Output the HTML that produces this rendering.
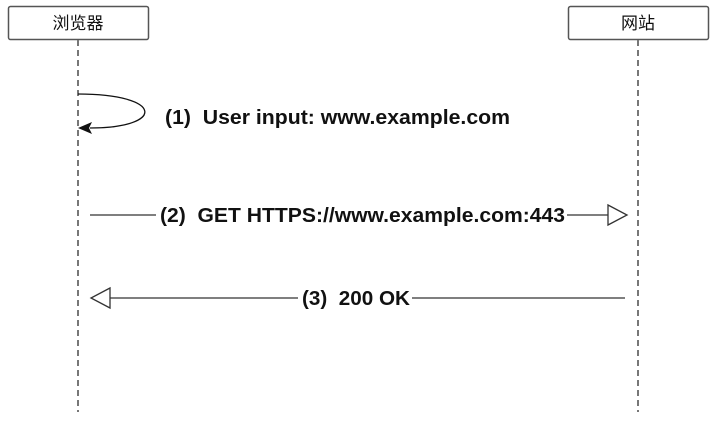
<!DOCTYPE html>
<html><head><meta charset="utf-8"><style>
body{margin:0;width:719px;height:420px;background:#fff;overflow:hidden}
svg text{font-family:"Liberation Sans",Arial,sans-serif;font-weight:bold;font-size:20.5px;fill:#111}
.cj{font-family:"Liberation Sans","Noto Sans CJK SC",sans-serif;font-weight:normal;font-size:17px}
</style></head><body>
<svg width="719" height="420" xmlns="http://www.w3.org/2000/svg">
<rect x="8.5" y="6.5" width="140" height="33" rx="2" fill="#fff" stroke="#555" stroke-width="1.5"/>
<text class="cj" x="78" y="29" text-anchor="middle">浏览器</text>
<rect x="568.5" y="6.5" width="140" height="33" rx="2" fill="#fff" stroke="#555" stroke-width="1.5"/>
<text class="cj" x="638" y="29" text-anchor="middle">网站</text>
<line x1="78" y1="40" x2="78" y2="412" stroke="#777" stroke-width="2" stroke-dasharray="6,4"/>
<line x1="638" y1="40" x2="638" y2="412" stroke="#777" stroke-width="2" stroke-dasharray="6,4"/>
<path d="M78 94 C165 94 165 128 90 128" fill="none" stroke="#111" stroke-width="1.3"/>
<path d="M78 128 L92 122 L89 128 L92 134 Z" fill="#111"/>
<text x="165" y="124" textLength="345" lengthAdjust="spacingAndGlyphs" xml:space="preserve">(1)  User input: www.example.com</text>
<line x1="90" y1="215" x2="156" y2="215" stroke="#333" stroke-width="1.3"/>
<text x="160" y="222" textLength="405" lengthAdjust="spacingAndGlyphs" xml:space="preserve">(2)  GET HTTPS://www.example.com:443</text>
<line x1="567" y1="215" x2="608" y2="215" stroke="#333" stroke-width="1.3"/>
<path d="M608 205 L627 215 L608 225 Z" fill="#fff" stroke="#333" stroke-width="1.3"/>
<path d="M110 288 L91 298 L110 308 Z" fill="#fff" stroke="#333" stroke-width="1.3"/>
<line x1="110" y1="298" x2="298" y2="298" stroke="#333" stroke-width="1.3"/>
<text x="302" y="305" textLength="108" lengthAdjust="spacingAndGlyphs" xml:space="preserve">(3)  200 OK</text>
<line x1="412" y1="298" x2="625" y2="298" stroke="#333" stroke-width="1.3"/>
</svg>
</body></html>
